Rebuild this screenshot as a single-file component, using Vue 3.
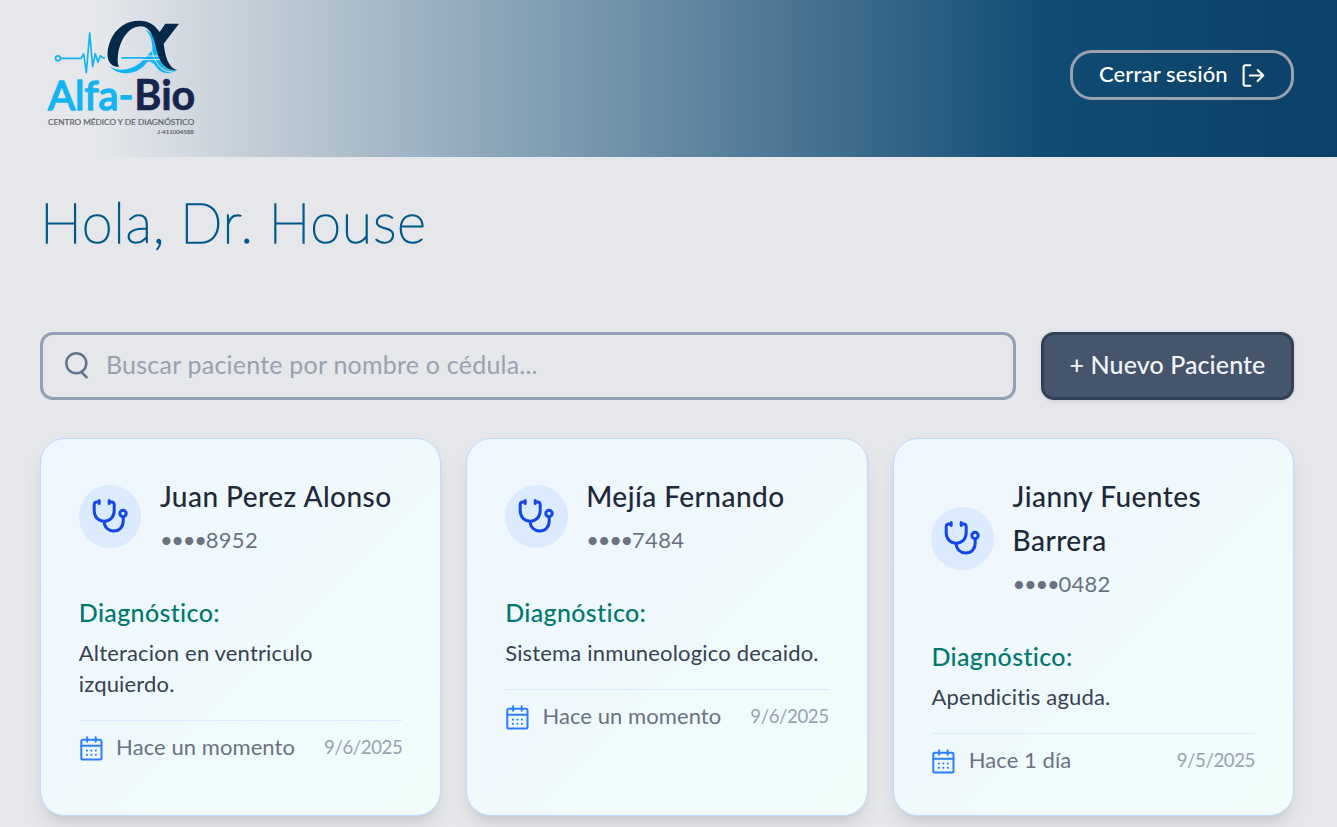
<script setup>
import { ref, computed } from 'vue'

const query = ref('')
const patients = [
  { name: 'Juan Perez Alonso', id: '8952', diagnosis: 'Alteracion en ventriculo izquierdo.', ago: 'Hace un momento', date: '9/6/2025' },
  { name: 'Mejía Fernando', id: '7484', diagnosis: 'Sistema inmuneologico decaido.', ago: 'Hace un momento', date: '9/6/2025' },
  { name: 'Jianny Fuentes Barrera', id: '0482', diagnosis: 'Apendicitis aguda.', ago: 'Hace 1 día', date: '9/5/2025' },
]
const visible = computed(() => {
  const q = query.value.trim().toLowerCase()
  return patients.filter(p => !q || p.name.toLowerCase().includes(q) || p.id.includes(q))
})
</script>

<template>
  <div class="page">
    <header class="topbar">
      <svg class="logo" viewBox="0 0 495 375" role="img" aria-label="Alfa-Bio">
        <g fill="none" stroke="#14b4f2" stroke-width="5" stroke-linejoin="round" stroke-linecap="round">
          <circle cx="54" cy="133" r="7.5" />
          <path d="M62 133H123L131 120L139 176L149 57L158 158L166 119L174 145L181 125L187 131L193 132" />
        </g>
        <path fill="#14b4f2" d="M208 157C238 176 282 167 309 139C327 119 337 108 337 108C338 82 330 58 314 45C341 56 355 92 360 137C371 163 391 173 415 165C397 182 364 184 346 155C337 145 330 142 322 144C295 183 239 190 208 157Z" />
        <path fill="none" stroke="#e3e6ea" stroke-width="3" d="M335 109C342 135 357 176 400 174M244 126H362M244 137H362" />
        <path fill="#14b4f2" d="M244 129H366V134H244Z" />
        <path fill="#03294a" d="M237 159C199 159 195 118 213 76C229 41 259 20 298 20C326 20 344 32 359 54L376 29H417L371 89C376 126 382 155 409 168C379 170 362 151 352 116C343 77 334 38 303 37C263 37 238 83 234 124C232 141 233 153 237 159Z" />
        <g font-family="Lato, 'Liberation Sans', sans-serif">
          <text x="24" y="289" font-size="124" textLength="256" lengthAdjust="spacingAndGlyphs" fill="#14b4f2" stroke="#14b4f2" stroke-width="5" stroke-linejoin="round">Alfa-</text>
          <text x="283" y="289" font-size="124" font-weight="700" textLength="183" lengthAdjust="spacingAndGlyphs" fill="#17254a" stroke="#17254a" stroke-width="2" stroke-linejoin="round">Bio</text>
          <text x="24" y="333" font-size="23" textLength="439" lengthAdjust="spacingAndGlyphs" fill="#5d6268" stroke="#5d6268" stroke-width=".5">CENTRO MÉDICO Y DE DIAGNÓSTICO</text>
          <text x="352" y="360" font-size="17" textLength="109" lengthAdjust="spacingAndGlyphs" fill="#5d6268" stroke="#5d6268" stroke-width=".5">J-411004588</text>
        </g>
      </svg>
      <button class="logout">
        <span>Cerrar sesión</span>
        <svg viewBox="0 0 24 24" width="25" height="25" fill="none" stroke="currentColor" stroke-width="2" stroke-linejoin="round" stroke-linecap="round">
          <path d="M9 2.2H4.2Q2.5 2.2 2.5 3.9V20.1Q2.5 21.8 4.2 21.8H9M8.5 12H21.4M16 6.8L21.4 12L16 17.2" />
        </svg>
      </button>
    </header>

    <main>
      <h1>Hola, Dr. House</h1>
      <div class="tools">
        <label class="search">
          <svg viewBox="0 0 26 28" width="26" height="28" fill="none" stroke="currentColor" stroke-width="2.5">
            <circle cx="12.3" cy="12.2" r="10" /><path d="M16.4 20.2L23.3 27" />
          </svg>
          <input v-model="query" placeholder="Buscar paciente por nombre o cédula..." />
        </label>
        <button class="add">+ Nuevo Paciente</button>
      </div>

      <section class="grid">
        <article v-for="p in visible" :key="p.id" class="card">
          <div class="head">
            <div class="avatar">
              <svg viewBox="0 0 36 34" width="36" height="34" fill="none" stroke="currentColor" stroke-width="3" stroke-linecap="round">
                <path d="M7.2 2.2L3.7 3.2Q2.2 3.7 2.2 5.4V11.5C2.2 18 6.3 22.3 12.2 22.3S22.2 18 22.2 11.5V5.4Q22.2 3.7 20.7 3.2L17.2 2.2M7.2 1.6V4.6M17.2 1.6V4.6M12.2 22.3C12.2 28.5 16.6 32 21.7 32C27.4 32 31.2 27.8 31.2 22V18.5" />
                <circle cx="31" cy="14.5" r="3.2" />
              </svg>
            </div>
            <div class="who">
              <h2>{{ p.name }}</h2>
              <p class="id"><span class="mask">••••</span>{{ p.id }}</p>
            </div>
          </div>
          <h3>Diagnóstico:</h3>
          <p class="diagnosis">{{ p.diagnosis }}</p>
          <footer>
            <svg viewBox="0 0 24 24" width="25" height="25" fill="none" stroke="currentColor" stroke-width="1.9" stroke-linecap="round">
              <rect x="2.2" y="3.6" width="19.4" height="19" rx="1.6" />
              <path d="M2.2 9.3H21.6M7.8 1.3V5.6M16 1.3V5.6" />
              <path stroke-width="2" d="M7.6 14h.01M11.9 14h.01M16.2 14h.01M7.6 18.1h.01M11.9 18.1h.01M16.2 18.1h.01" />
            </svg>
            <span class="ago">{{ p.ago }}</span>
            <time>{{ p.date }}</time>
          </footer>
        </article>
      </section>
    </main>
  </div>
</template>

<style>
body { background: #e5e7eb; overflow: hidden; }
</style>

<style scoped>
.page { font-family: Lato, "Liberation Sans", sans-serif; height: 827px; overflow: hidden; background: #e5e7eb; }
h1, h2, h3, p { margin: 0; }
button, input { font: inherit; }
.topbar { box-sizing: border-box; height: 157px; padding: 0 43px 7px 40px; display: flex; align-items: center; justify-content: space-between; background: linear-gradient(90deg, #e5e7eb 7.5%, #104b73 78.5%, #0c4068); }
.logo { width: 165px; height: 125px; margin-top: 3px; }
.logout { box-sizing: border-box; width: 224px; height: 50px; display: flex; align-items: center; gap: 13px; padding: 0 0 0 26px; color: #fff; background: transparent; border: 3px solid #99a1af; border-radius: 22px; font-size: 22px; font-weight: 500; letter-spacing: .12px; }
.logout span { margin-top: -4px; }
main { padding: 0 43px 0 40px; }
h1 { padding-top: 31px; height: 144px; line-height: 67px; font-size: 56px; font-weight: 200; letter-spacing: .7px; word-spacing: -2px; color: #00598a; -webkit-text-stroke: 1.5px #00598a; }
.tools { display: flex; gap: 25px; height: 68px; }
.search { box-sizing: border-box; flex: 1; display: flex; align-items: center; gap: 16px; padding: 0 0 2px 21px; border: 3px solid #90a1b9; border-radius: 13px; color: #62748e; }
.search input { flex: 1; min-width: 0; border: 0; outline: 0; padding: 0; margin-top: -3px; background: transparent; font-size: 25px; letter-spacing: .22px; color: #1d293d; }
.search input::placeholder { color: #99a1af; opacity: 1; }
.add { box-sizing: border-box; width: 253px; padding: 0 0 5px; color: #f1f5f9; background: #45556c; border: 3px solid #314158; border-radius: 13px; font-size: 25px; font-weight: 500; letter-spacing: .1px; box-shadow: 0 1px 4px rgba(0, 0, 0, .12); }
.grid { display: grid; grid-template-columns: repeat(3, 1fr); gap: 25px; margin-top: 38px; height: 378px; }
.card { box-sizing: border-box; padding: 35px 38px 38px 37.8px; border: 1px solid #bedbff; border-radius: 25px; background: linear-gradient(135deg, #eff6ff, #f0fdfa); box-shadow: 0 12px 19px -4px rgba(0, 0, 0, .1), 0 5px 8px -5px rgba(0, 0, 0, .1); }
.head { display: flex; align-items: center; gap: 18.6px; margin-bottom: 32.6px; }
.avatar { flex: none; display: flex; align-items: center; justify-content: center; width: 62.5px; height: 62.5px; margin-bottom: 3px; border-radius: 50%; background: #dbeafe; color: #1447e6; }
.avatar svg { margin: 0 0 2px -1px; }
h2 { font-size: 28px; font-weight: 500; line-height: 44px; letter-spacing: .47px; color: #1e2939; }
.id { font-size: 22px; line-height: 44px; letter-spacing: .3px; color: #6a7282; }
.mask { letter-spacing: -1.3px; }
h3 { font-size: 25px; font-weight: 500; line-height: 35px; letter-spacing: .35px; color: #00786f; }
.diagnosis { margin-top: 7px; font-size: 22px; line-height: 31px; letter-spacing: .17px; color: #364153; }
footer { display: flex; align-items: center; margin-top: 21px; padding-top: 11px; border-top: 1px solid #dbeafe; line-height: 31px; color: #2b7fff; }
footer svg { margin-top: 2px; }
.ago { margin: -1px 0 0 12.3px; font-size: 22px; letter-spacing: .07px; color: #6a7282; }
time { margin-left: auto; font-size: 18.6px; letter-spacing: -.4px; color: #99a1af; }
</style>
